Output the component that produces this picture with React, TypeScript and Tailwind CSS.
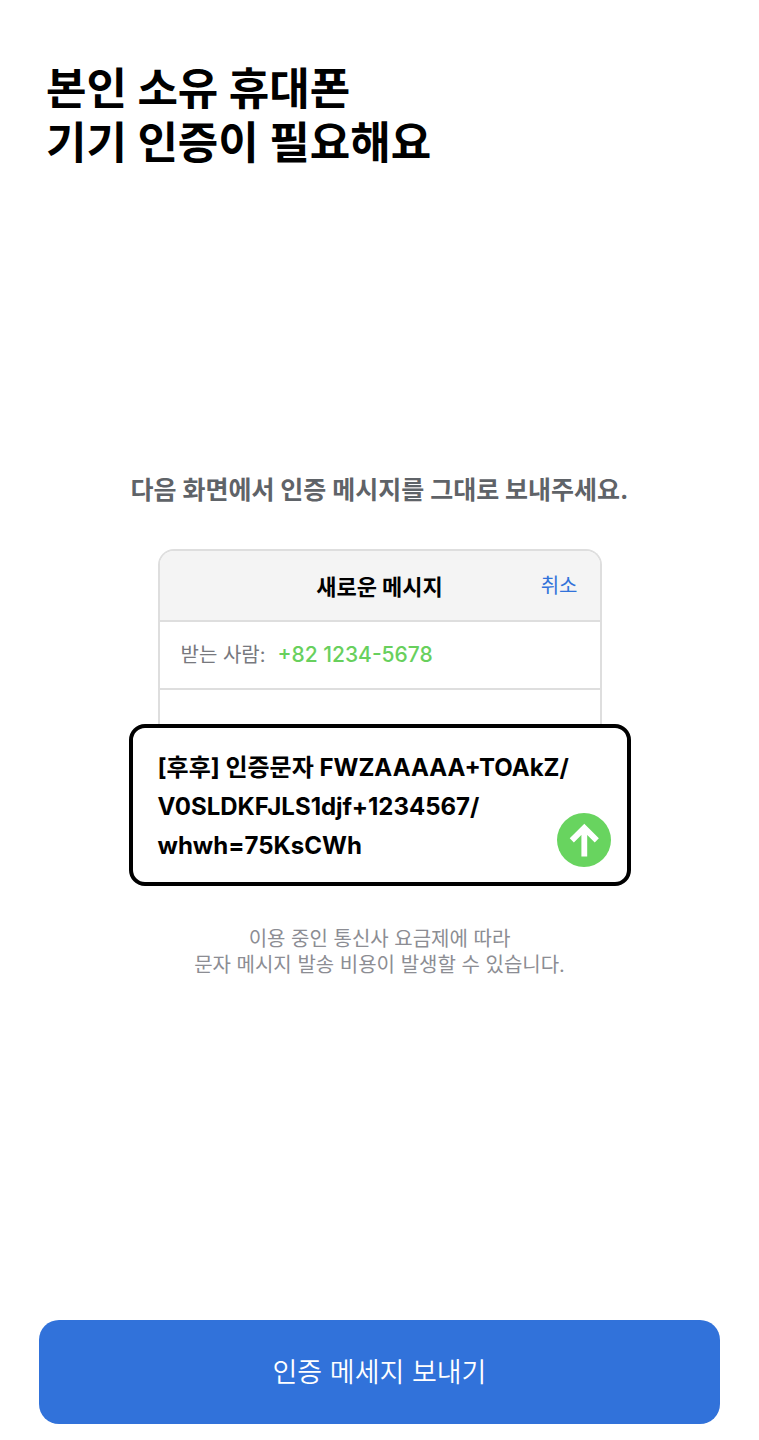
function MessagePreview() {
  return (
    <section aria-label="메시지 미리보기" className="w-full max-w-[502px]">
      <div className="mx-[29px] rounded-t-2xl border-2 border-b-0 border-[#dedede]">
        <header className="grid h-[71px] grid-cols-[1fr_auto_1fr] items-center rounded-t-[14px] border-b-2 border-[#dedede] bg-[#f4f4f4] px-[22px]">
          <h2 className="col-start-2 pt-1 text-[22px] font-bold">새로운 메시지</h2>
          <button type="button" className="justify-self-end text-[20px] text-[#3172da]">
            취소
          </button>
        </header>
        <p className="flex h-[68px] items-center gap-3 border-b-2 border-[#dedede] px-[21px] text-[20px]">
          <span className="text-[#77787e]">받는 사람:</span>
          <span className="text-[21px] font-medium text-[#68d05d]">+82 1234-5678</span>
        </p>
        <div className="h-[34px]" />
      </div>
      <div className="flex items-end justify-between rounded-2xl border-4 border-black bg-white pt-5 pr-4 pb-[15px] pl-[25px]">
        <p className="pb-[2px] text-[24px] leading-[39px] font-bold whitespace-nowrap">
          [후후] 인증문자 FWZAAAAA+TOAkZ/
          <br />
          V0SLDKFJLS1djf+1234567/
          <br />
          whwh=75KsCWh
        </p>
        <button
          type="button"
          aria-label="보내기"
          className="-ml-14 flex size-[54px] shrink-0 items-center justify-center rounded-full bg-[#68d45f] text-white"
        >
          <svg viewBox="0 0 54 54" className="size-[54px]" fill="none" stroke="currentColor" strokeWidth="5.8">
            <path d="M27.3 43.5V15M14.8 27.4 27.3 14.9 39.8 27.4" />
          </svg>
        </button>
      </div>
    </section>
  );
}

export default function App() {
  return (
    <main className="flex min-h-screen flex-col bg-white px-[39px] pt-[62px] pb-4 font-[Inter,'Noto_Sans_CJK_KR',sans-serif] text-black">
      <h1 className="px-[7px] text-[44px] leading-[54px] font-bold">
        본인 소유 휴대폰
        <br />
        기기 인증이 필요해요
      </h1>
      <div className="flex flex-1 flex-col items-center justify-center pb-[41px]">
        <p className="mb-[40px] text-[25px] leading-[38px] font-bold text-[#5f6368]">
          다음 화면에서 인증 메시지를 그대로 보내주세요.
        </p>
        <MessagePreview />
        <p className="mt-[40px] text-center text-[20px] leading-[26px] text-[#8c8d93]">
          이용 중인 통신사 요금제에 따라
          <br />
          문자 메시지 발송 비용이 발생할 수 있습니다.
        </p>
      </div>
      <button type="button" className="h-[104px] rounded-[20px] bg-[#3172da] pt-[2px] text-[27px] font-[350] text-white">
        인증 메세지 보내기
      </button>
    </main>
  );
}
